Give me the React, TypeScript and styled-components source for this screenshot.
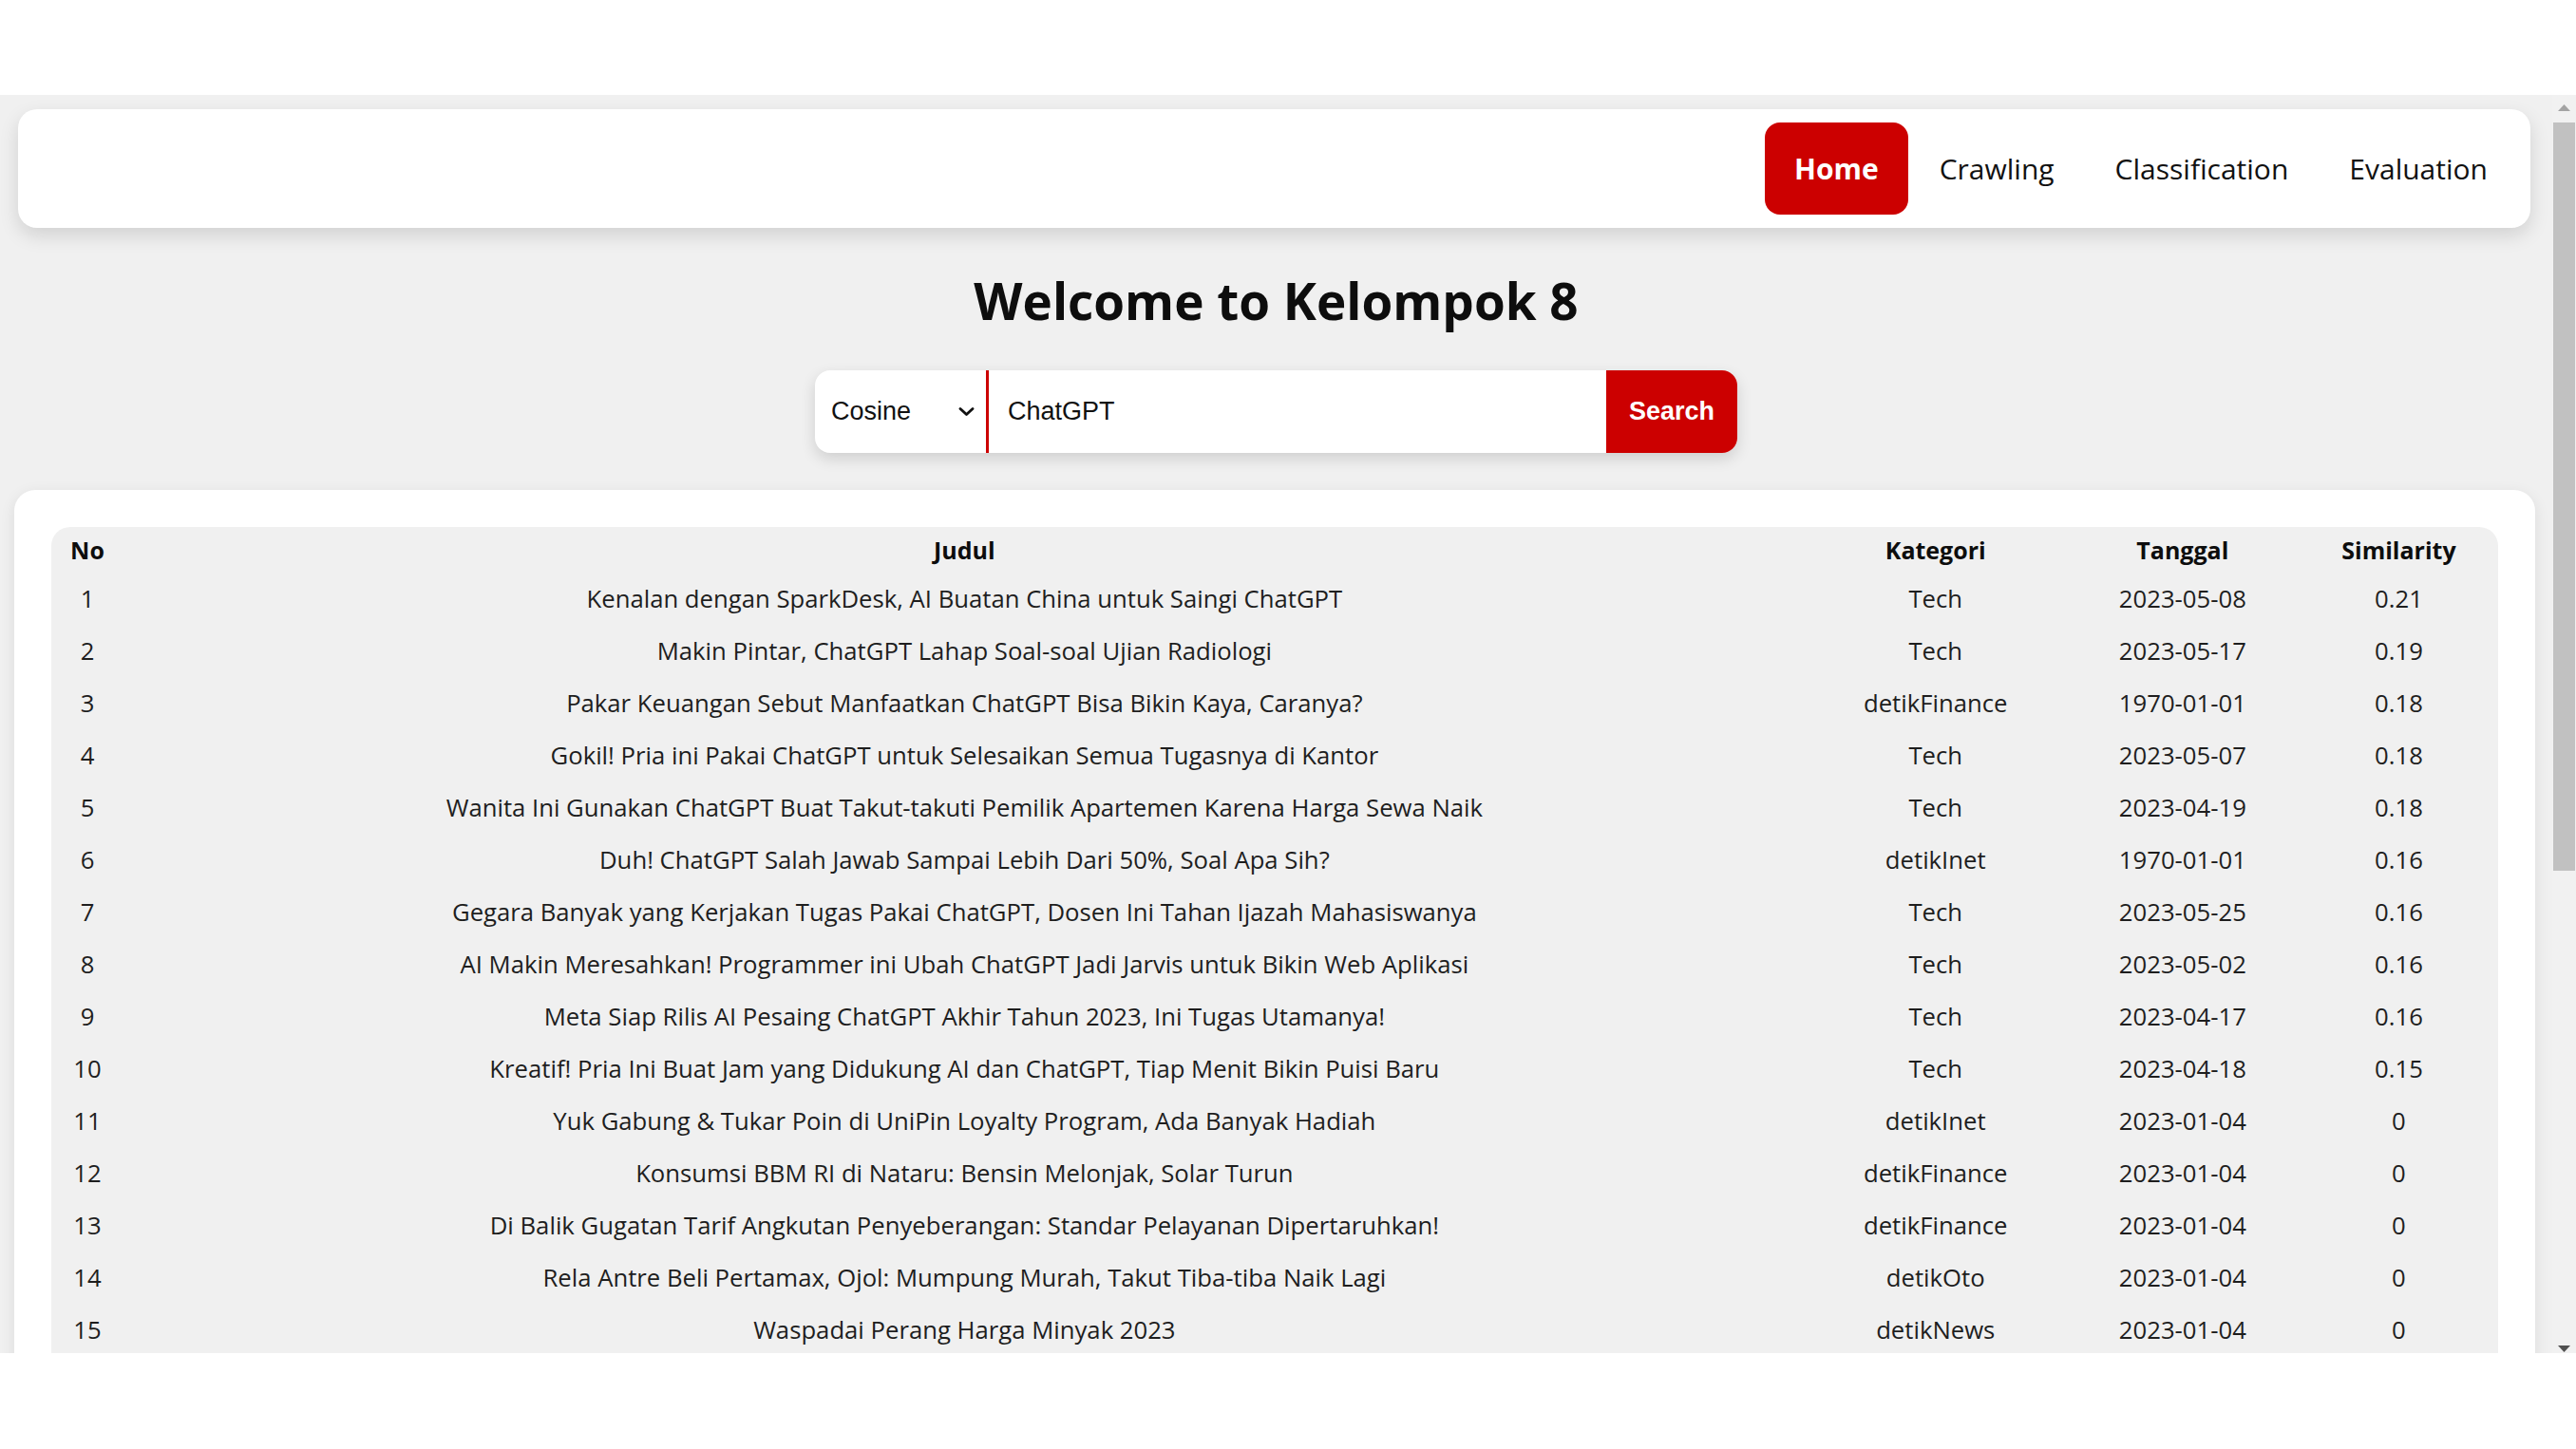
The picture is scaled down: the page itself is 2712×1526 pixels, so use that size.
import React from "react";
import styled, { createGlobalStyle } from "styled-components";

const GlobalStyle = createGlobalStyle`
  html, body {
    margin: 0;
    padding: 0;
    background: #ffffff;
    overflow: hidden;
  }
  * { box-sizing: border-box; }
`;

const Screen = styled.div`
  width: 2712px;
  height: 1526px;
  display: flex;
  flex-direction: column;
  background: #ffffff;
`;

const Band = styled.div<{ $h?: number }>`
  height: ${(p) => (p.$h ? `${p.$h}px` : "auto")};
  flex: ${(p) => (p.$h ? "0 0 auto" : "1 1 auto")};
  background: #ffffff;
`;

const Viewport = styled.div`
  height: 1325px;
  display: flex;
  flex: 0 0 auto;
  overflow: hidden;
`;

const Page = styled.main`
  flex: 1 1 auto;
  background: #f0f0f0;
  overflow: hidden;
  display: flex;
  flex-direction: column;
  font-family: "Open Sans", "Noto Sans", sans-serif;
  color: #111111;
  & > * {
    flex-shrink: 0;
  }
`;

const NavCard = styled.nav`
  margin: 15px 23px 0 19px;
  height: 125px;
  background: #ffffff;
  border-radius: 20px;
  box-shadow: 0 8px 20px rgba(0, 0, 0, 0.13);
  display: flex;
  justify-content: flex-end;
  align-items: center;
  padding: 0 14px 0 20px;
  gap: 2px;
`;

const NavItem = styled.a<{ $active?: boolean }>`
  height: 97px;
  padding: 0 31px;
  display: flex;
  align-items: center;
  border-radius: 16px;
  font-size: 30px;
  font-weight: ${(p) => (p.$active ? 700 : 500)};
  color: ${(p) => (p.$active ? "#ffffff" : "#111111")};
  background: ${(p) => (p.$active ? "#cc0000" : "transparent")};
  text-decoration: none;
`;

const Title = styled.h1`
  margin: 45px 0 0;
  text-align: center;
  font-size: 53px;
  line-height: 1.2;
  font-weight: 700;
  color: #0d0d0d;
`;

const SearchRow = styled.div`
  display: flex;
  justify-content: center;
  margin-top: 41px;
`;

const SearchBar = styled.form`
  width: 971px;
  height: 87px;
  display: flex;
  border-radius: 16px;
  background: #ffffff;
  box-shadow: 0 6px 16px rgba(0, 0, 0, 0.14);
  font-family: "Liberation Sans", Arial, sans-serif;
`;

const MethodSelect = styled.div`
  width: 183px;
  flex: 0 0 auto;
  display: flex;
  align-items: center;
  justify-content: space-between;
  padding: 0 12px 0 17px;
  border-right: 3px solid #cc0000;
  font-size: 27px;
  color: #111111;
`;

const QueryInput = styled.div`
  flex: 1 1 auto;
  display: flex;
  align-items: center;
  padding-left: 20px;
  font-size: 27px;
  color: #111111;
`;

const SearchButton = styled.button`
  width: 138px;
  flex: 0 0 auto;
  border: none;
  border-radius: 0 16px 16px 0;
  background: #cc0000;
  color: #ffffff;
  font-family: "Liberation Sans", Arial, sans-serif;
  font-weight: 700;
  font-size: 27px;
  padding: 0;
`;

const ResultsCard = styled.section`
  margin: 39px 18px 0 15px;
  background: #ffffff;
  border-radius: 22px;
  padding: 39px;
  box-shadow: 0 4px 16px rgba(0, 0, 0, 0.09);
`;

const TableFrame = styled.div`
  background: #f0f0f0;
  border-radius: 20px;
  padding-bottom: 30px;
`;

const Table = styled.table`
  width: 100%;
  table-layout: fixed;
  border-collapse: separate;
  border-spacing: 0;
`;

const HeadCell = styled.th<{ $w: number }>`
  width: ${(p) => p.$w}px;
  height: 48px;
  padding: 0;
  text-align: center;
  vertical-align: middle;
  font-size: 25px;
  font-weight: 700;
  color: #0d0d0d;
`;

const Cell = styled.td`
  height: 55px;
  padding: 0;
  text-align: center;
  vertical-align: middle;
  font-size: 25.7px;
  font-weight: 400;
  color: #1e1e1e;
  white-space: nowrap;
`;

const Scrollbar = styled.div`
  width: 25px;
  flex: 0 0 auto;
  background: #f1f1f1;
  display: flex;
  flex-direction: column;
`;

const ScrollArrow = styled.div<{ $down?: boolean }>`
  height: 27px;
  flex: 0 0 auto;
  display: flex;
  justify-content: center;
  align-items: ${(p) => (p.$down ? "flex-end" : "center")};
  padding-bottom: ${(p) => (p.$down ? "1px" : "0")};
`;

const Track = styled.div`
  flex: 1 1 auto;
  padding-top: 2px;
`;

const Thumb = styled.div`
  height: 788px;
  margin: 0 1px;
  background: #c1c1c1;
`;

const columns = [
  { label: "No", w: 76 },
  { label: "Judul", w: 1770 },
  { label: "Kategori", w: 274 },
  { label: "Tanggal", w: 246 },
  { label: "Similarity", w: 209 },
];

const rows: [string, string, string, string][] = [
  ["Kenalan dengan SparkDesk, AI Buatan China untuk Saingi ChatGPT", "Tech", "2023-05-08", "0.21"],
  ["Makin Pintar, ChatGPT Lahap Soal-soal Ujian Radiologi", "Tech", "2023-05-17", "0.19"],
  ["Pakar Keuangan Sebut Manfaatkan ChatGPT Bisa Bikin Kaya, Caranya?", "detikFinance", "1970-01-01", "0.18"],
  ["Gokil! Pria ini Pakai ChatGPT untuk Selesaikan Semua Tugasnya di Kantor", "Tech", "2023-05-07", "0.18"],
  ["Wanita Ini Gunakan ChatGPT Buat Takut-takuti Pemilik Apartemen Karena Harga Sewa Naik", "Tech", "2023-04-19", "0.18"],
  ["Duh! ChatGPT Salah Jawab Sampai Lebih Dari 50%, Soal Apa Sih?", "detikInet", "1970-01-01", "0.16"],
  ["Gegara Banyak yang Kerjakan Tugas Pakai ChatGPT, Dosen Ini Tahan Ijazah Mahasiswanya", "Tech", "2023-05-25", "0.16"],
  ["AI Makin Meresahkan! Programmer ini Ubah ChatGPT Jadi Jarvis untuk Bikin Web Aplikasi", "Tech", "2023-05-02", "0.16"],
  ["Meta Siap Rilis AI Pesaing ChatGPT Akhir Tahun 2023, Ini Tugas Utamanya!", "Tech", "2023-04-17", "0.16"],
  ["Kreatif! Pria Ini Buat Jam yang Didukung AI dan ChatGPT, Tiap Menit Bikin Puisi Baru", "Tech", "2023-04-18", "0.15"],
  ["Yuk Gabung & Tukar Poin di UniPin Loyalty Program, Ada Banyak Hadiah", "detikInet", "2023-01-04", "0"],
  ["Konsumsi BBM RI di Nataru: Bensin Melonjak, Solar Turun", "detikFinance", "2023-01-04", "0"],
  ["Di Balik Gugatan Tarif Angkutan Penyeberangan: Standar Pelayanan Dipertaruhkan!", "detikFinance", "2023-01-04", "0"],
  ["Rela Antre Beli Pertamax, Ojol: Mumpung Murah, Takut Tiba-tiba Naik Lagi", "detikOto", "2023-01-04", "0"],
  ["Waspadai Perang Harga Minyak 2023", "detikNews", "2023-01-04", "0"],
];

const Chevron = () => (
  <svg width="17" height="11" viewBox="0 0 17 11" aria-hidden="true">
    <path d="M2 2.5 L8.5 8.5 L15 2.5" fill="none" stroke="#111" strokeWidth="2.8" strokeLinecap="round" strokeLinejoin="round" />
  </svg>
);

const Triangle = ({ down, color }: { down?: boolean; color: string }) => (
  <svg width="13" height="7" viewBox="0 0 13 7" aria-hidden="true">
    <path d={down ? "M0 0 L13 0 L6.5 7 Z" : "M0 7 L13 7 L6.5 0 Z"} fill={color} />
  </svg>
);

export default function App() {
  return (
    <Screen>
      <GlobalStyle />
      <Band $h={100} />
      <Viewport>
        <Page>
          <NavCard>
            <NavItem $active>Home</NavItem>
            <NavItem>Crawling</NavItem>
            <NavItem>Classification</NavItem>
            <NavItem>Evaluation</NavItem>
          </NavCard>
          <Title>Welcome to Kelompok 8</Title>
          <SearchRow>
            <SearchBar onSubmit={(e) => e.preventDefault()}>
              <MethodSelect>
                <span>Cosine</span>
                <Chevron />
              </MethodSelect>
              <QueryInput>ChatGPT</QueryInput>
              <SearchButton type="submit">Search</SearchButton>
            </SearchBar>
          </SearchRow>
          <ResultsCard>
            <TableFrame>
              <Table>
                <thead>
                  <tr>
                    {columns.map((c) => (
                      <HeadCell key={c.label} $w={c.w}>
                        {c.label}
                      </HeadCell>
                    ))}
                  </tr>
                </thead>
                <tbody>
                  {rows.map((r, i) => (
                    <tr key={i}>
                      <Cell>{i + 1}</Cell>
                      <Cell>{r[0]}</Cell>
                      <Cell>{r[1]}</Cell>
                      <Cell>{r[2]}</Cell>
                      <Cell>{r[3]}</Cell>
                    </tr>
                  ))}
                </tbody>
              </Table>
            </TableFrame>
          </ResultsCard>
        </Page>
        <Scrollbar>
          <ScrollArrow>
            <Triangle color="#a3a3a3" />
          </ScrollArrow>
          <Track>
            <Thumb />
          </Track>
          <ScrollArrow $down>
            <Triangle down color="#505050" />
          </ScrollArrow>
        </Scrollbar>
      </Viewport>
      <Band />
    </Screen>
  );
}
